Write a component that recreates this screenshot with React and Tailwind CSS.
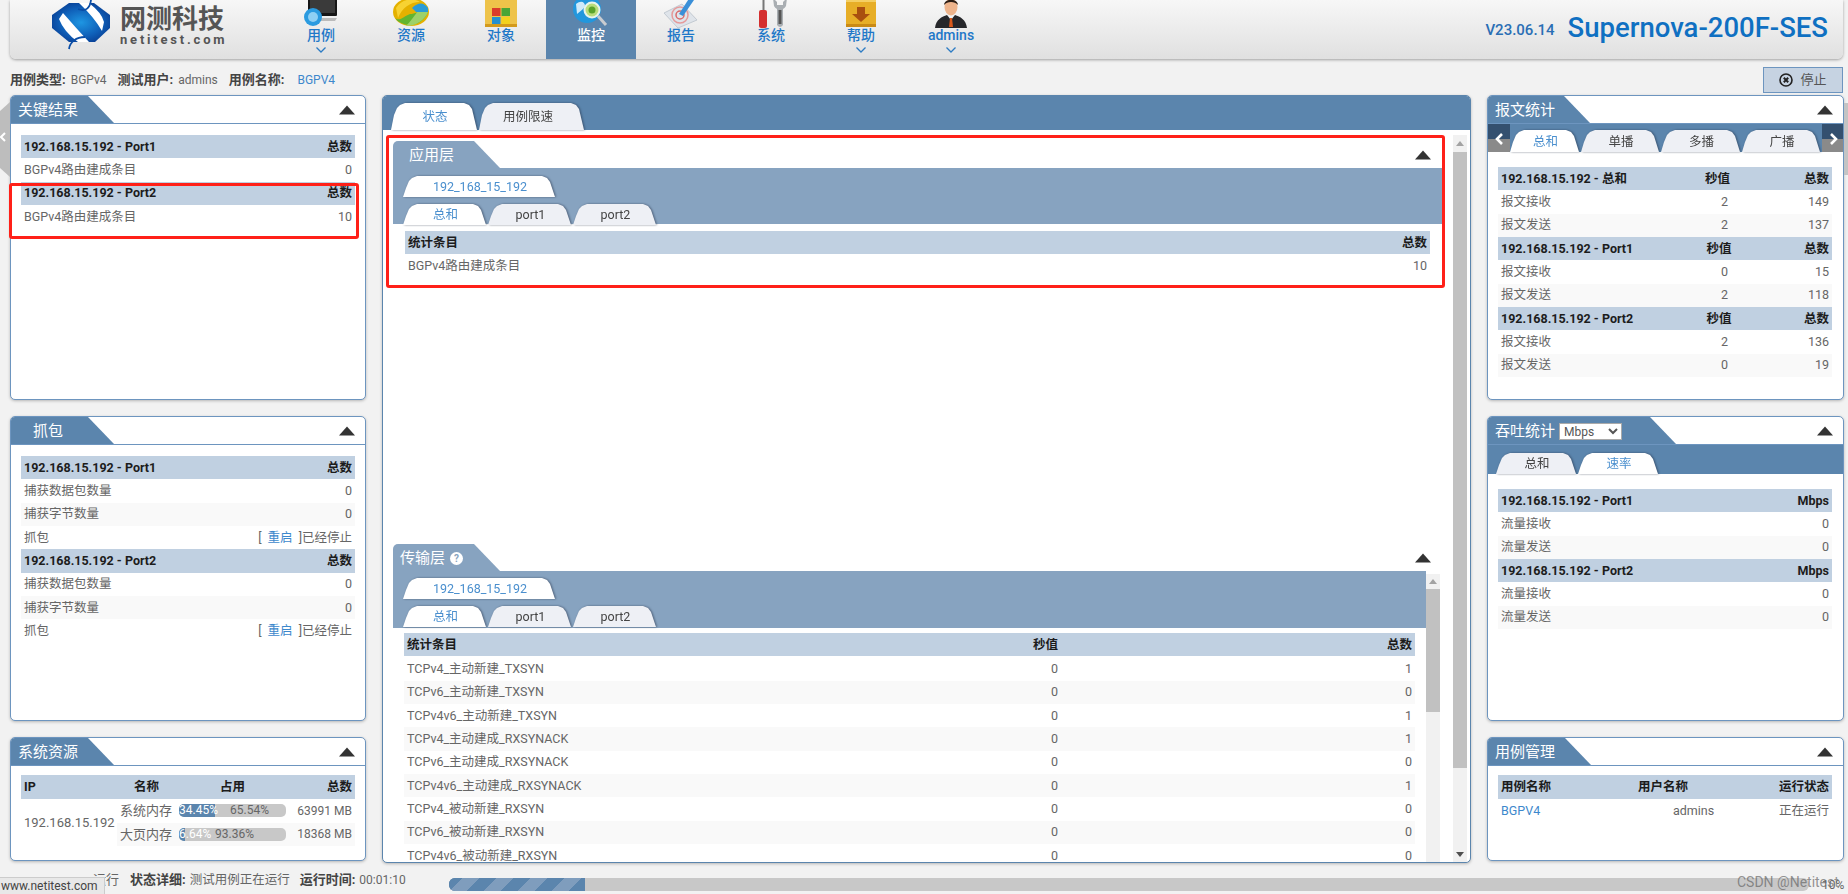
import React from 'react';

// Fixed tab silhouettes
const tabClip = '[clip-path:polygon(0_100%,3px_12px,6px_5px,9px_2px,14px_0,calc(100%-15px)_0,calc(100%-10px)_2px,calc(100%-7px)_6px,calc(100%-2px)_100%)]';
const titleClip = '[clip-path:polygon(0_0,calc(100%-26px)_0,100%_100%,0_100%)]';

const Triangle = () => (
  <svg width="16" height="10" viewBox="0 0 16 10" className="shrink-0">
    <path d="M8 0.5 L16 9.5 L0 9.5 Z" fill="#333" />
  </svg>
);

const Chevron = () => (
  <svg width="12" height="8" viewBox="0 0 12 8" className="block">
    <path d="M1.5 1.5 L6 6 L10.5 1.5" fill="none" stroke="#2d7cc4" strokeWidth="1.3" />
  </svg>
);

const PagerArrow = ({ dir }) => (
  <svg width="9" height="12" viewBox="0 0 9 12">
    <path d={dir === 'left' ? 'M7 1 L2 6 L7 11' : 'M2 1 L7 6 L2 11'} fill="none" stroke="#fff" strokeWidth="2.6" />
  </svg>
);

const Logo = () => (
  <svg width="58" height="50" viewBox="0 0 58 50">
    <defs>
      <radialGradient id="logoBlue" cx="0.5" cy="0.5" r="0.6">
        <stop offset="0" stopColor="#1e96e2" />
        <stop offset="0.6" stopColor="#0f5fb8" />
        <stop offset="1" stopColor="#083a8e" />
      </radialGradient>
    </defs>
    <path d="M17 3 L42 3 L58 15 L58 28 L43 42 L17 42 L0 28 L0 15 Z" fill="url(#logoBlue)" />
    <path d="M27 3 L37 3 Q50 13 52 22 L50 31 Q42 17 27 3 Z" fill="#fff" />
    <path d="M7 19 L11 13 Q24 28 37 42 L26 42 Q12 32 7 19 Z" fill="#fff" />
    <path d="M26 9 C34 12 38 8 39 0" fill="none" stroke="#0a4da6" strokeWidth="1.8" />
    <path d="M17 49 C18 42 24 37 33 37" fill="none" stroke="#0a4da6" strokeWidth="1.8" />
  </svg>
);

const CaseIcon = () => (
  <svg width="36" height="30" viewBox="0 0 36 30">
    <rect x="5" y="-6" width="29" height="22" rx="1" fill="#161616" />
    <rect x="7" y="-4" width="25" height="17" fill="#3a3a3a" />
    <path d="M8 18 H34 L32 21 H14 Z" fill="#bbb" />
    <circle cx="10" cy="17" r="9" fill="#2b9be0" />
    <circle cx="10" cy="17" r="5" fill="#8fd0f4" />
  </svg>
);

const ResourceIcon = () => (
  <svg width="38" height="30" viewBox="0 0 38 30">
    <ellipse cx="19" cy="12" rx="18" ry="14" fill="#e4b100" />
    <path d="M3 18 C10 28 30 28 36 12 C32 8 24 14 18 14 C12 16 8 22 3 18 Z" fill="#62b52f" />
    <path d="M14 26 C24 26 33 20 36 12 L26 11 C22 16 18 22 14 26 Z" fill="#9dd16a" />
    <path d="M20 8 C26 2 32 2 36 8 L36 12 L24 12 Z" fill="#2a9bd6" />
    <path d="M4 8 C10 -2 22 -2 28 2 C18 2 10 8 6 18 Z" fill="#f7d232" />
  </svg>
);

const ObjectIcon = () => (
  <svg width="36" height="30" viewBox="0 0 36 30">
    <path d="M2 -4 H32 Q34 -4 34 0 V24 Q34 27 31 27 H5 Q2 27 2 24 Z" fill="#eec34a" />
    <rect x="2" y="24" width="32" height="3" fill="#d39a1c" />
    <rect x="9" y="8" width="8.5" height="8" fill="#d93c2a" />
    <rect x="18.5" y="8" width="8.5" height="8" fill="#49a536" />
    <rect x="9" y="17" width="8.5" height="7" fill="#2490d0" />
    <rect x="18.5" y="17" width="8.5" height="7" fill="#f3d21e" />
  </svg>
);

const MonitorIcon = () => (
  <svg width="36" height="30" viewBox="0 0 36 30">
    <circle cx="14" cy="9" r="14" fill="#2297dd" />
    <path d="M3 4 C8 0 12 2 12 6 C10 10 6 12 4 14 Z" fill="#cfeafa" />
    <circle cx="19" cy="10" r="7.5" fill="#b9dd7b" stroke="#e8f4ec" strokeWidth="2" />
    <circle cx="19" cy="10" r="3.5" fill="#5aa42b" />
    <path d="M25 16 L33 25" stroke="#c9ccd0" strokeWidth="3" />
  </svg>
);

const ReportIcon = () => (
  <svg width="36" height="30" viewBox="0 0 36 30">
    <path d="M1 13 L19 4 L34 20 L15 28 Z" fill="#dfe4ea" stroke="#c3cad2" />
    <circle cx="17" cy="15" r="8" fill="none" stroke="#e59a9a" strokeWidth="1.5" />
    <circle cx="17" cy="15" r="4" fill="none" stroke="#d96a6a" strokeWidth="1.5" />
    <path d="M16 14 L27 -3 L31 0 L20 16 Z" fill="#3a8fd8" />
  </svg>
);

const SystemIcon = () => (
  <svg width="36" height="30" viewBox="0 0 36 30">
    <rect x="9.5" y="-3" width="2" height="13" fill="#777" />
    <rect x="6" y="10" width="8" height="18" rx="2" fill="#d42f2f" />
    <path d="M20 -2 L21 6 Q22 8 24 9 V25 Q27 29 30 25 V9 Q32 8 33 6 L34 -2 L30 2 V5 H24 V2 Z" fill="#a9aeb2" />
    <rect x="25.5" y="10" width="3" height="14" fill="#555" />
  </svg>
);

const HelpIcon = () => (
  <svg width="36" height="30" viewBox="0 0 36 30">
    <path d="M3 -4 H33 V25 Q33 27 31 27 H5 Q3 27 3 25 Z" fill="#e7ae27" />
    <path d="M3 -4 H33 V2 H3 Z" fill="#f4cf64" />
    <rect x="3" y="24" width="30" height="3" fill="#c98a15" />
    <path d="M14 7 H22 V14 H27 L18 22 L9 14 H14 Z" fill="#a9500f" />
  </svg>
);

const AdminIcon = () => (
  <svg width="36" height="30" viewBox="0 0 36 30">
    <path d="M2 28 C3 19 9 17 14 15 H22 C27 17 33 19 34 28 Z" fill="#26272b" />
    <path d="M14 15 L18 20 L22 15 Z" fill="#f2f2f2" />
    <path d="M17 18 H19 L20 27 H16 Z" fill="#d9591c" />
    <ellipse cx="18" cy="7" rx="6.5" ry="8.5" fill="#eeb48c" />
    <path d="M11 5 C11 -2 25 -2 25 5 C22 1 14 1 11 5 Z" fill="#2a1c14" />
  </svg>
);

const navItems = [
  { label: '用例', icon: <CaseIcon />, more: true },
  { label: '资源', icon: <ResourceIcon /> },
  { label: '对象', icon: <ObjectIcon /> },
  { label: '监控', icon: <MonitorIcon />, active: true },
  { label: '报告', icon: <ReportIcon /> },
  { label: '系统', icon: <SystemIcon /> },
  { label: '帮助', icon: <HelpIcon />, more: true },
  { label: 'admins', icon: <AdminIcon />, more: true },
];

const Tab = ({ width, height = 'h-[21px]', active, className = '', children }) => (
  <div className="[filter:drop-shadow(1px_0_1px_rgba(30,40,60,0.55))]">
    <div
      className={`${tabClip} ${width} ${height} ${className} flex items-center justify-center pt-[2px] text-[12.5px] ${
        active ? 'bg-white text-[#4a8fce]' : 'bg-[#eef0f5] text-[#444]'
      }`}
    >
      {children}
    </div>
  </div>
);

const Panel = ({ title, titleWidth, titleClass = 'pl-[7px]', height, band, children }) => (
  <section className={`${height} overflow-hidden rounded-[5px] border border-[#6d95bf] bg-white shadow-[0_1px_3px_rgba(0,0,0,0.25)]`}>
    <div className="flex h-[28px] items-center justify-between border-b border-[#6d95bf] pr-[10px]">
      <div className={`${titleClip} ${titleWidth} ${titleClass} flex h-full items-center gap-[3px] bg-[#5b85ad] pt-[2px] text-[15px] text-white`}>
        {title}
      </div>
      <Triangle />
    </div>
    {band}
    {children}
  </section>
);

// A table block: `cols` are the fixed widths of the columns after the first one
const Row = ({ cells, cols = [], head, alt }) => (
  <div
    className={`flex h-[23.33px] items-center px-[3px] pt-[1px] text-[12.5px] ${
      head ? 'bg-[#c0d0e1] font-bold text-[#1c1c1c]' : alt ? 'bg-[#f9f9f9] text-[#666]' : 'text-[#666]'
    }`}
  >
    <span className="flex-1 whitespace-nowrap">{cells[0]}</span>
    {cells.slice(1).map((cell, i) => (
      <span key={i} className={`${cols[i] || ''} whitespace-nowrap text-right`}>
        {cell}
      </span>
    ))}
  </div>
);

const Restart = () => (
  <span>
    [ <span className="mx-[3px] text-[#3d88cc]">重启</span> ]已经停止
  </span>
);

const Scrollbar = ({ className, arrowClass, thumb, thumbGap, end }) => (
  <div className={`${className} flex w-[14px] shrink-0 flex-col items-center bg-[#f1f1f1]`}>
    <svg width="8" height="5" viewBox="0 0 8 5" className={`${arrowClass} shrink-0`}>
      <path d="M4 0 L8 5 H0 Z" fill="#a3a3a3" />
    </svg>
    <div className={`${thumb} ${thumbGap} w-full shrink-0 bg-[#c1c1c1]`} />
    {end && (
      <svg width="8" height="5" viewBox="0 0 8 5" className="mt-auto mb-[5px] shrink-0">
        <path d="M0 0 H8 L4 5 Z" fill="#505050" />
      </svg>
    )}
  </div>
);

const Bar = ({ blue, used, free, usedClass, freeClass }) => (
  <div className="relative h-[13px] w-[107px] overflow-hidden rounded-[5px] bg-[#c8c8c8] text-xs leading-[13px]">
    <div className={`${blue} h-full bg-[#5b85ad]`} />
    <span className={`${usedClass} absolute top-0 text-white`}>{used}</span>
    <span className={`${freeClass} absolute top-0 text-[#666]`}>{free}</span>
  </div>
);

const SubTabs = () => (
  <>
    <div className="flex h-[21px]">
      <Tab width="w-[154px]" active>192_168_15_192</Tab>
    </div>
    <div className="mt-[7px] flex h-[21px]">
      <Tab width="w-[85px]" active>总和</Tab>
      <Tab width="w-[85px]">port1</Tab>
      <Tab width="w-[85px]">port2</Tab>
    </div>
  </>
);

const PagerBox = ({ dir }) => (
  <div className="flex h-full w-[22px] flex-col bg-[#34506f]">
    <div className="flex-1" />
    <div className="h-[13px] bg-[#8a8a8a]" />
    <div className="absolute top-[9px] flex w-[22px] justify-center">
      <PagerArrow dir={dir} />
    </div>
  </div>
);

const transportRows = [
  ['TCPv4_主动新建_TXSYN', '0', '1'],
  ['TCPv6_主动新建_TXSYN', '0', '0'],
  ['TCPv4v6_主动新建_TXSYN', '0', '1'],
  ['TCPv4_主动建成_RXSYNACK', '0', '1'],
  ['TCPv6_主动建成_RXSYNACK', '0', '0'],
  ['TCPv4v6_主动建成_RXSYNACK', '0', '1'],
  ['TCPv4_被动新建_RXSYN', '0', '0'],
  ['TCPv6_被动新建_RXSYN', '0', '0'],
  ['TCPv4v6_被动新建_RXSYN', '0', '0'],
];

const packetBlocks = [
  { name: '192.168.15.192 - 总和', col: 'w-[105px]', rx: ['2', '149'], tx: ['2', '137'] },
  { name: '192.168.15.192 - Port1', col: 'w-[102px]', rx: ['0', '15'], tx: ['2', '118'] },
  { name: '192.168.15.192 - Port2', col: 'w-[102px]', rx: ['2', '136'], tx: ['0', '19'] },
];

const App = () => (
  <div
    className="relative h-[894px] w-full overflow-hidden bg-[#f2f2f2] text-xs text-[#666]"
    style={{ fontFamily: 'Roboto, "Noto Sans CJK SC", sans-serif' }}
  >
    {/* 顶部导航 */}
    <header className="ml-[10px] flex h-[59px] w-[1833px] items-stretch rounded-b-[6px] bg-gradient-to-b from-[#f7f7f7] to-[#e0e0e0] shadow-[0_1px_3px_rgba(0,0,0,0.35)]">
      <div className="flex w-[266px] shrink-0 items-start gap-[10px] pl-[42px]">
        <Logo />
        <div className="pt-[5px] text-[#555]">
          <div className="text-[26px] leading-[28px] font-bold whitespace-nowrap">网测科技</div>
          <div className="text-[13px] leading-[13px] font-bold tracking-[2.8px]">netitest.com</div>
        </div>
      </div>
      <nav className="flex">
        {navItems.map((item) => (
          <div
            key={item.label}
            className={`flex w-[90px] flex-col items-center overflow-hidden ${item.active ? 'bg-[#5b85ad]' : ''}`}
          >
            <div className="h-[28px] shrink-0">{item.icon}</div>
            <span className={`mt-[-1px] text-sm leading-[16px] font-medium ${item.active ? 'text-white' : 'text-[#1f78c8]'}`}>
              {item.label}
            </span>
            {item.more && <div className="mt-[3px]"><Chevron /></div>}
          </div>
        ))}
      </nav>
      <div className="ml-auto flex items-center gap-[13px] pr-[15px]">
        <span className="mt-[3px] text-[15px] font-medium text-[#2a6fb5]">V23.06.14</span>
        <span className="mb-[4px] text-[27.5px] leading-none font-medium text-[#0f70c2]">Supernova-200F-SES</span>
      </div>
    </header>

    {/* 用例信息 */}
    <div className="flex h-[36px] items-center justify-between pr-[5px] pl-[10px] pt-[6px]">
      <div className="flex items-center whitespace-nowrap">
        <b className="text-[13px] text-[#444]">用例类型:</b>
        <span className="ml-[5px]">BGPv4</span>
        <b className="ml-[11px] text-[13px] text-[#444]">测试用户:</b>
        <span className="ml-[5px]">admins</span>
        <b className="ml-[11px] text-[13px] text-[#444]">用例名称:</b>
        <span className="ml-[13px] text-[#3d88cc]">BGPV4</span>
      </div>
      <button className="flex h-[26px] w-[80px] items-center justify-center gap-[7px] border border-[#6d95bf] bg-[#c6d3e2] text-[13px] text-[#555]">
        <svg width="14" height="14" viewBox="0 0 14 14">
          <circle cx="7" cy="7" r="6" fill="none" stroke="#222" strokeWidth="1.6" />
          <path d="M4.8 4.8 L9.2 9.2 M9.2 4.8 L4.8 9.2" stroke="#222" strokeWidth="2" />
        </svg>
        停止
      </button>
    </div>

    {/* 主体三列 */}
    <main className="ml-[10px] flex gap-[16px]">
      <div className="flex w-[356px] shrink-0 flex-col gap-[16px]">
        <Panel title="关键结果" titleWidth="w-[103px]" height="h-[305px]">
          <div className="px-[10px] pt-[11px]">
            <Row head cells={['192.168.15.192 - Port1', '总数']} />
            <Row cells={['BGPv4路由建成条目', '0']} />
            <Row head cells={['192.168.15.192 - Port2', '总数']} />
            <Row cells={['BGPv4路由建成条目', '10']} />
          </div>
        </Panel>
        <Panel title="抓包" titleWidth="w-[103px]" titleClass="pl-[22px]" height="h-[305px]">
          <div className="px-[10px] pt-[11px]">
            <Row head cells={['192.168.15.192 - Port1', '总数']} />
            <Row cells={['捕获数据包数量', '0']} />
            <Row alt cells={['捕获字节数量', '0']} />
            <Row cells={['抓包', <Restart />]} />
            <Row head cells={['192.168.15.192 - Port2', '总数']} />
            <Row cells={['捕获数据包数量', '0']} />
            <Row alt cells={['捕获字节数量', '0']} />
            <Row cells={['抓包', <Restart />]} />
          </div>
        </Panel>
        <Panel title="系统资源" titleWidth="w-[103px]" height="h-[124px]">
          <div className="px-[10px] pt-[9px]">
            <div className="flex h-[24px] items-center bg-[#c0d0e1] px-[3px] text-[12.5px] font-bold text-[#1c1c1c]">
              <span className="w-[110px]">IP</span>
              <span className="w-[25px]">名称</span>
              <span className="ml-[61px] w-[25px]">占用</span>
              <span className="flex-1 text-right">总数</span>
            </div>
            <div className="flex">
              <div className="flex w-[96px] shrink-0 items-center pl-[3px] text-[13px]">192.168.15.192</div>
              <div className="flex-1">
                <div className="flex h-[23.5px] items-center pl-[3px]">
                  <span className="w-[59px] shrink-0 text-[13px] whitespace-nowrap">系统内存</span>
                  <Bar blue="w-[36px]" used="34.45%" free="65.54%" usedClass="left-0" freeClass="left-[51px]" />
                  <span className="flex-1 pr-[3px] text-right whitespace-nowrap">63991 MB</span>
                </div>
                <div className="flex h-[23.5px] items-center bg-[#f9f9f9] pl-[3px]">
                  <span className="w-[59px] shrink-0 text-[13px] whitespace-nowrap">大页内存</span>
                  <Bar blue="w-[6px]" used="6.64%" free="93.36%" usedClass="left-0" freeClass="left-[36px]" />
                  <span className="flex-1 pr-[3px] text-right whitespace-nowrap">18368 MB</span>
                </div>
              </div>
            </div>
          </div>
        </Panel>
      </div>

      {/* 中间：状态 */}
      <section className="flex h-[768px] w-[1089px] shrink-0 flex-col overflow-hidden rounded-[5px] border border-[#5b85ad] bg-white shadow-[0_1px_3px_rgba(0,0,0,0.25)]">
        <div className="flex h-[34px] shrink-0 items-end bg-[#5b85ad] pl-[8px]">
          <Tab width="w-[88px]" height="h-[27px]" active>状态</Tab>
          <Tab width="w-[107px]" height="h-[27px]" className="pr-[9px]">用例限速</Tab>
        </div>
        <div className="flex min-h-0 flex-1 pl-[10px]">
          <div className="flex w-[1049px] shrink-0 flex-col pt-[11px]">
            <div className="h-[403px] shrink-0">
              <div className="flex h-[27px] items-center justify-between pr-[11px]">
                <div className={`${titleClip} flex h-full w-[107px] items-center rounded-tl-[5px] bg-[#87a3c0] pt-[2px] pl-[16px] text-[15px] text-white`}>应用层</div>
                <Triangle />
              </div>
              <div className="h-[56px] bg-[#87a3c0] pt-[8px] pl-[10px]">
                <SubTabs />
              </div>
              <div className="pt-[7px] pr-[12px] pl-[12px]">
                <Row head cells={['统计条目', '总数']} />
                <Row cells={['BGPv4路由建成条目', '10']} />
              </div>
            </div>
            <div className="flex h-[27px] shrink-0 items-center justify-between pr-[11px]">
              <div className={`${titleClip} flex h-full w-[107px] items-center gap-[5px] rounded-tl-[5px] bg-[#87a3c0] pt-[2px] pl-[7px] text-[15px] text-white`}>
                传输层
                <span className="flex h-[13px] w-[13px] items-center justify-center rounded-full bg-white text-[10px] leading-none font-bold text-[#87a3c0]">?</span>
              </div>
              <Triangle />
            </div>
            <div className="flex min-h-0 flex-1">
              <div className="w-[1033px] shrink-0 overflow-hidden">
                <div className="h-[57px] bg-[#87a3c0] pt-[7px] pl-[10px]">
                  <SubTabs />
                </div>
                <div className="pt-[5px] pr-[11px] pl-[11px]">
                  <Row head cols={['w-[160px]', 'w-[354px]']} cells={['统计条目', '秒值', '总数']} />
                  <div className="pt-[1px]">
                    {transportRows.map((row, i) => (
                      <Row key={row[0]} alt={i % 2 === 1} cols={['w-[160px]', 'w-[354px]']} cells={row} />
                    ))}
                  </div>
                </div>
              </div>
              <Scrollbar className="mt-[3px]" arrowClass="mt-[5px]" thumbGap="mt-[5px]" thumb="h-[123px]" />
            </div>
          </div>
          <Scrollbar className="mt-[5px] ml-[11px]" arrowClass="mt-[6px]" thumbGap="mt-[6px]" thumb="h-[616px]" end />
        </div>
      </section>

      {/* 右列 */}
      <div className="flex w-[357px] shrink-0 flex-col gap-[16px]">
        <Panel
          title="报文统计"
          titleWidth="w-[102px]"
          height="h-[305px]"
          band={
            <div className="flex h-[28px] items-end justify-between bg-[#5b85ad]">
              <div className="relative h-full"><PagerBox dir="left" /></div>
              <div className="flex">
                <Tab width="w-[71px]" height="h-[22px]" active>总和</Tab>
                <Tab width="w-[80px]" height="h-[22px]">单播</Tab>
                <Tab width="w-[81px]" height="h-[22px]">多播</Tab>
                <Tab width="w-[80px]" height="h-[22px]">广播</Tab>
              </div>
              <div className="relative h-full"><PagerBox dir="right" /></div>
            </div>
          }
        >
          <div className="pt-[15px] pr-[11px] pl-[10px]">
            {packetBlocks.map((block) => (
              <div key={block.name}>
                <Row head cols={[block.col, 'w-[101px]']} cells={[block.name, '秒值', '总数']} />
                <Row cols={[block.col, 'w-[101px]']} cells={['报文接收', ...block.rx]} />
                <Row alt cols={[block.col, 'w-[101px]']} cells={['报文发送', ...block.tx]} />
              </div>
            ))}
          </div>
        </Panel>
        <Panel
          title={
            <>
              吞吐统计
              <select className="ml-[1px] h-[17px] w-[63px] border border-[#aaa] bg-white text-xs text-[#555]" defaultValue="Mbps">
                <option>Mbps</option>
                <option>Kbps</option>
              </select>
            </>
          }
          titleWidth="w-[188px]"
          height="h-[305px]"
          band={
            <div className="flex h-[29px] items-end bg-[#5b85ad] pl-[8px]">
              <Tab width="w-[82px]">总和</Tab>
              <Tab width="w-[82px]" active>速率</Tab>
            </div>
          }
        >
          <div className="pt-[15px] pr-[11px] pl-[10px]">
            <Row head cells={['192.168.15.192 - Port1', 'Mbps']} />
            <Row cells={['流量接收', '0']} />
            <Row alt cells={['流量发送', '0']} />
            <Row head cells={['192.168.15.192 - Port2', 'Mbps']} />
            <Row cells={['流量接收', '0']} />
            <Row alt cells={['流量发送', '0']} />
          </div>
        </Panel>
        <Panel title="用例管理" titleWidth="w-[103px]" height="h-[124px]">
          <div className="pt-[9px] pr-[11px] pl-[10px]">
            <div className="flex h-[24px] items-center bg-[#c0d0e1] px-[3px] text-[12.5px] font-bold text-[#1c1c1c]">
              <span className="w-[137px]">用例名称</span>
              <span>用户名称</span>
              <span className="flex-1 text-right">运行状态</span>
            </div>
            <div className="flex h-[24px] items-center px-[3px] text-[12.5px]">
              <span className="w-[172px] text-[#3d88cc]">BGPV4</span>
              <span className="w-[73px]">admins</span>
              <span className="flex-1 text-right">正在运行</span>
            </div>
          </div>
        </Panel>
      </div>
    </main>

    {/* 底部状态栏 */}
    <div className="flex h-[31px] items-center pt-[3px] text-[13px] whitespace-nowrap">
      <span className="w-[130px] shrink-0 pr-[11px] text-right">运行</span>
      <b className="text-[#444]">状态详细:</b>
      <span className="ml-[4px] text-[12.5px]">测试用例正在运行</span>
      <b className="ml-[10px] text-[#444]">运行时间:</b>
      <span className="ml-[4px] text-xs">00:01:10</span>
      <div className="absolute top-[878px] left-[449px] h-[13px] w-[1360px] overflow-hidden rounded-[6px] bg-[#c8c8c8]">
        <div className="h-full w-[136px] bg-[#5b85ad] bg-[repeating-linear-gradient(-45deg,#5b85ad_0,#5b85ad_12px,#7f9dbd_12px,#7f9dbd_24px)]" />
      </div>
      <span className="absolute top-[877px] left-[1822px] text-xs">10%</span>
    </div>

    {/* 覆盖层 */}
    <div className="absolute top-[877px] left-0 flex h-[17px] w-[105px] items-center border-t border-r border-[#ccc] bg-[#e8e8e8] pl-[1px] text-xs text-[#444]">www.netitest.com</div>
    <div className="absolute top-[872px] left-[1737px] text-sm text-[#666]/70">CSDN @Netitest</div>
    <div className="absolute top-[102px] left-0 h-[75px] w-[10px] bg-[#bdbdbd] [clip-path:polygon(100%_0,0_12%,0_88%,100%_100%)]" />
    <svg width="6" height="10" viewBox="0 0 6 10" className="absolute top-[132px] left-0">
      <path d="M5 1 L1 5 L5 9" fill="none" stroke="#fff" strokeWidth="2" />
    </svg>
    <div className="absolute top-[103px] right-0 h-[72px] w-[4px] bg-[#c4c4c4]" />
    <div className="absolute top-[183px] left-[9px] h-[56px] w-[350px] rounded-[3px] border-[3px] border-[#ff2018]" />
    <div className="absolute top-[135px] left-[386px] h-[153px] w-[1059px] rounded-[3px] border-[3px] border-[#ff2018]" />
  </div>
);

export default App;
